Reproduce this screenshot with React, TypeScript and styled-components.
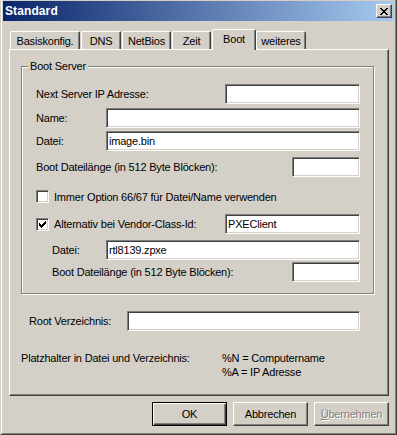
import styled, { createGlobalStyle } from "styled-components";

const GlobalStyle = createGlobalStyle`
	html, body {
		margin: 0;
		padding: 0;
		background: #d4d0c8;
	}
	body {
		font-family: "Liberation Sans", Arial, sans-serif;
		font-size: 11px;
		color: #000;
	}
`;

const Window = styled.div`
	box-sizing: border-box;
	width: 397px;
	height: 435px;
	background: #d4d0c8;
	border-left: 1px solid #d4d0c8;
	border-right: 1px solid #404040;
	border-bottom: 1px solid #404040;
	box-shadow: inset 1px 0 #fff, inset -1px -1px #808080;
	padding: 1px 2px 2px 2px;
	display: flex;
	flex-direction: column;
`;

const TitleBar = styled.div`
	height: 20px;
	display: flex;
	align-items: center;
	justify-content: space-between;
	padding: 0 2px 0 2px;
	background: linear-gradient(to right, #0a246a, #a6caf0);
`;

const TitleText = styled.span`
	color: #fff;
	font-weight: bold;
	font-size: 12px;
	letter-spacing: 0.1px;
`;

const CloseButton = styled.div`
	box-sizing: border-box;
	width: 16px;
	height: 14px;
	display: flex;
	align-items: center;
	justify-content: center;
	background: #d4d0c8;
	border: 1px solid;
	border-color: #fff #404040 #404040 #fff;
	box-shadow: inset -1px -1px #808080;
	padding-right: 1px;
`;

const Body = styled.div`
	padding: 8px 5px 0 6px;
	display: flex;
	flex-direction: column;
`;

const TabStrip = styled.div`
	height: 20px;
	display: flex;
	align-items: flex-end;
	gap: 1px;
	padding-left: 1px;
`;

const Tab = styled.div<{ $w: number; $active?: boolean }>`
	box-sizing: border-box;
	width: ${(p) => p.$w}px;
	height: ${(p) => (p.$active ? 21 : 18)}px;
	margin-bottom: ${(p) => (p.$active ? -1 : 0)}px;
	margin-right: ${(p) => (p.$active ? -1 : 0)}px;
	position: relative;
	z-index: ${(p) => (p.$active ? 2 : 0)};
	background: #d4d0c8;
	border-top: 1px solid #fff;
	border-left: 1px solid #fff;
	border-right: 1px solid #404040;
	border-radius: 2px 2px 0 0;
	box-shadow: inset -1px 0 #808080;
	display: flex;
	align-items: center;
	justify-content: center;
	padding-bottom: ${(p) => (p.$active ? 2 : 0)}px;
	letter-spacing: -0.2px;
`;

const Panel = styled.div`
	box-sizing: border-box;
	height: 347px;
	border-top: 1px solid #fff;
	border-left: 1px solid #fff;
	border-right: 1px solid #404040;
	border-bottom: 1px solid #404040;
	box-shadow: inset -1px -1px #808080;
	padding: 16px 14px 0 11px;
	display: flex;
	flex-direction: column;
`;

const GroupBox = styled.div`
	border: 1px solid #808080;
	box-shadow: inset 1px 1px #fff, 1px 1px #fff;
	padding: 0 13px 11px 14px;
	display: flex;
	flex-direction: column;
`;

const GroupTitle = styled.div`
	align-self: flex-start;
	margin: -7px 0 0 -8px;
	padding: 0 2px;
	line-height: 13px;
	background: #d4d0c8;
	letter-spacing: -0.2px;
`;

const FieldRow = styled.div<{ $mt: number; $indent?: number }>`
	display: flex;
	align-items: center;
	justify-content: space-between;
	margin-top: ${(p) => p.$mt}px;
	padding-left: ${(p) => p.$indent ?? 0}px;
	min-height: 13px;
`;

const Label = styled.span`
	white-space: nowrap;
	letter-spacing: -0.2px;
`;

const TextInput = styled.input<{ $w: number }>`
	box-sizing: border-box;
	width: ${(p) => p.$w}px;
	height: 20px;
	margin: 0;
	padding: 0 2px;
	background: #fff;
	border: 1px solid;
	border-color: #808080 #fff #fff #808080;
	box-shadow: inset 1px 1px #404040, inset -1px -1px #d4d0c8;
	font-family: "Liberation Sans", Arial, sans-serif;
	font-size: 11px;
	letter-spacing: -0.2px;
	color: #000;
	outline: none;
`;

const CheckLabel = styled.span`
	display: flex;
	align-items: center;
	gap: 5px;
	white-space: nowrap;
	letter-spacing: -0.2px;
`;

const Box = styled.span`
	box-sizing: border-box;
	width: 13px;
	height: 13px;
	flex: none;
	background: #fff;
	border: 1px solid;
	border-color: #808080 #fff #fff #808080;
	box-shadow: inset 1px 1px #404040, inset -1px -1px #d4d0c8;
	display: flex;
	align-items: center;
	justify-content: center;
`;

const RootRow = styled.div`
	display: flex;
	align-items: center;
	margin-top: 17px;
	padding: 0 14px 0 8px;
	justify-content: space-between;
`;

const HintGrid = styled.div`
	display: grid;
	grid-template-columns: 201px auto;
	margin-top: 20px;
	line-height: 14px;
	letter-spacing: -0.2px;
`;

const ButtonBar = styled.div`
	display: flex;
	justify-content: flex-end;
	gap: 6px;
	margin-top: 6px;
`;

const Button = styled.div<{ $default?: boolean; $disabled?: boolean }>`
	box-sizing: border-box;
	width: 75px;
	height: 24px;
	display: flex;
	align-items: center;
	justify-content: center;
	background: #d4d0c8;
	border: 1px solid;
	border-color: ${(p) => (p.$default ? "#000" : "#fff #404040 #404040 #fff")};
	box-shadow: ${(p) =>
		p.$default
			? "inset 1px 1px #fff, inset -1px -1px #404040, inset -2px -2px #808080"
			: "inset -1px -1px #808080"};
	color: ${(p) => (p.$disabled ? "#808080" : "#000")};
	text-shadow: ${(p) => (p.$disabled ? "1px 1px #fff" : "none")};
	letter-spacing: -0.2px;
`;

const checkRuns: [number, number, number][] = [
	[6, 0, 1],
	[5, 1, 2],
	[0, 2, 1],
	[4, 2, 3],
	[0, 3, 2],
	[3, 3, 3],
	[0, 4, 5],
	[1, 5, 3],
	[2, 6, 1],
];

const closeRuns: [number, number, number][] = [
	[0, 0, 2],
	[6, 0, 2],
	[1, 1, 2],
	[5, 1, 2],
	[2, 2, 4],
	[3, 3, 2],
	[2, 4, 4],
	[1, 5, 2],
	[5, 5, 2],
	[0, 6, 2],
	[6, 6, 2],
];

function Pixels({ runs, w, h }: { runs: [number, number, number][]; w: number; h: number }) {
	return (
		<svg width={w} height={h} viewBox={`0 0 ${w} ${h}`} shapeRendering="crispEdges">
			{runs.map(([x, y, len], i) => (
				<rect key={i} x={x} y={y} width={len} height={1} fill="#000" />
			))}
		</svg>
	);
}

function CheckBox({ checked }: { checked?: boolean }) {
	return <Box>{checked && <Pixels runs={checkRuns} w={7} h={7} />}</Box>;
}

const tabs = [
	{ label: "Basiskonfig.", w: 70 },
	{ label: "DNS", w: 40 },
	{ label: "NetBios", w: 49 },
	{ label: "Zeit", w: 39 },
	{ label: "Boot", w: 44, active: true },
	{ label: "weiteres", w: 50 },
];

export default function App() {
	return (
		<>
			<GlobalStyle />
			<Window>
				<TitleBar>
					<TitleText>Standard</TitleText>
					<CloseButton>
						<Pixels runs={closeRuns} w={8} h={7} />
					</CloseButton>
				</TitleBar>
				<Body>
					<TabStrip>
						{tabs.map((t) => (
							<Tab key={t.label} $w={t.w} $active={t.active}>
								{t.label}
							</Tab>
						))}
					</TabStrip>
					<Panel>
						<GroupBox>
							<GroupTitle>Boot Server</GroupTitle>
							<FieldRow $mt={11}>
								<Label>Next Server IP Adresse:</Label>
								<TextInput $w={135} readOnly />
							</FieldRow>
							<FieldRow $mt={4}>
								<Label>Name:</Label>
								<TextInput $w={254} readOnly />
							</FieldRow>
							<FieldRow $mt={3}>
								<Label>Datei:</Label>
								<TextInput $w={254} readOnly value="image.bin" />
							</FieldRow>
							<FieldRow $mt={6}>
								<Label>Boot Dateilänge (in 512 Byte Blöcken):</Label>
								<TextInput $w={68} readOnly />
							</FieldRow>
							<FieldRow $mt={13}>
								<CheckLabel>
									<CheckBox />
									Immer Option 66/67 für Datei/Name verwenden
								</CheckLabel>
							</FieldRow>
							<FieldRow $mt={11}>
								<CheckLabel>
									<CheckBox checked />
									Alternativ bei Vendor-Class-Id:
								</CheckLabel>
								<TextInput $w={135} readOnly value="PXEClient" />
							</FieldRow>
							<FieldRow $mt={6} $indent={16}>
								<Label>Datei:</Label>
								<TextInput $w={254} readOnly value="rtl8139.zpxe" />
							</FieldRow>
							<FieldRow $mt={2} $indent={16}>
								<Label>Boot Dateilänge (in 512 Byte Blöcken):</Label>
								<TextInput $w={68} readOnly />
							</FieldRow>
						</GroupBox>
						<RootRow>
							<Label>Root Verzeichnis:</Label>
							<TextInput $w={233} readOnly />
						</RootRow>
						<HintGrid>
							<span>Platzhalter in Datei und Verzeichnis:</span>
							<span>%N = Computername</span>
							<span />
							<span>%A = IP Adresse</span>
						</HintGrid>
					</Panel>
					<ButtonBar>
						<Button $default>OK</Button>
						<Button>Abbrechen</Button>
						<Button $disabled>
							<span>
								<u>Ü</u>bernehmen
							</span>
						</Button>
					</ButtonBar>
				</Body>
			</Window>
		</>
	);
}
